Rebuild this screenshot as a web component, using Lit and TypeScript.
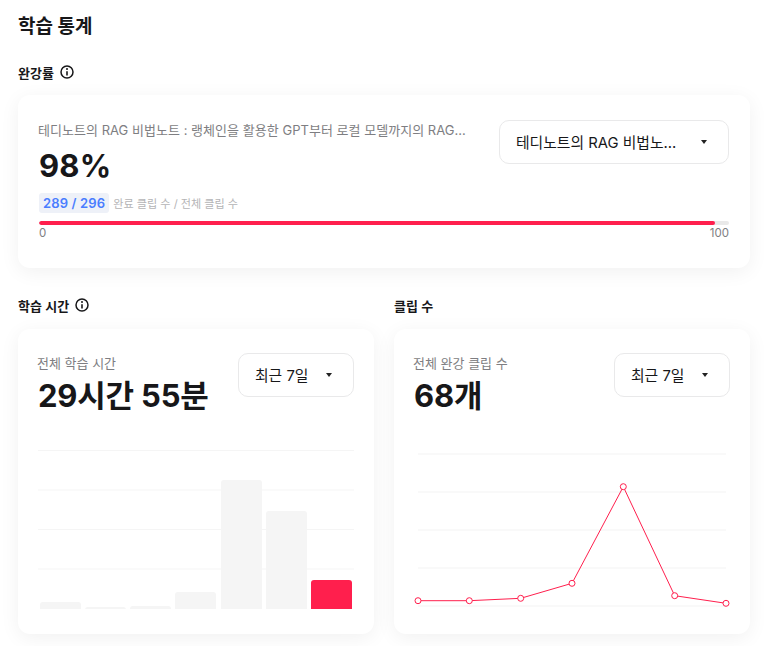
import { css, html, LitElement, svg } from 'lit';
import { customElement } from 'lit/decorators.js';

const bars = [
  { x: 2, top: 152, fill: '#f5f5f5' },
  { x: 47, top: 157, fill: '#f5f5f5' },
  { x: 92, top: 156, fill: '#f5f5f5' },
  { x: 137, top: 142, fill: '#f5f5f5' },
  { x: 183, top: 30, fill: '#f5f5f5' },
  { x: 228, top: 61, fill: '#f5f5f5' },
  { x: 273, top: 130, fill: '#ff1f4d' },
];

const points = [
  [6, 150.7], [57.3, 150.7], [108.7, 148.3], [160, 133.3], [211.3, 36.7], [262.7, 145.7], [314, 153.3],
];

@customElement('app-root')
export class AppRoot extends LitElement {
  static styles = css`
    :host {
      display: block;
      width: 764px;
      height: 646px;
      overflow: hidden;
      background: #fff;
      color: #171719;
      font-family: Inter, "Noto Sans CJK KR", sans-serif;
    }
    .page {
      padding: 15px 14px 0 18px;
    }
    h1 {
      margin: 0;
      font-size: 19px;
      line-height: 24px;
      font-weight: 700;
    }
    .label {
      display: flex;
      align-items: center;
      gap: 6px;
      height: 20px;
      font-size: 13px;
      font-weight: 600;
    }
    .label svg { display: block; }
    .rate-label { margin-top: 23px; }
    .card {
      background: #fff;
      border-radius: 12px;
      box-shadow: 0 4px 20px rgba(0, 0, 0, 0.06);
    }
    .rate-card {
      margin-top: 13px;
      height: 173px;
      box-sizing: border-box;
      padding: 25px 21px 0;
    }
    .rate-top {
      display: flex;
      justify-content: space-between;
      align-items: flex-start;
    }
    .course {
      margin: 0 0 0 -1px;
      padding-top: 1px;
      font-size: 13px;
      letter-spacing: 0.03px;
      line-height: 18px;
      color: #7e7e82;
    }
    .percent {
      margin-top: 7px;
      font-size: 31px;
      line-height: 40px;
      font-weight: 700;
      letter-spacing: 0.2px;
    }
    .select {
      display: flex;
      align-items: center;
      justify-content: space-between;
      box-sizing: border-box;
      height: 44px;
      border: 1px solid #e9e9ea;
      border-radius: 10px;
      background: #fff;
      font-size: 14.8px;
      white-space: nowrap;
    }
    .select > span:first-child { padding-bottom: 2px; }
    .select.wide {
      width: 230px;
      padding: 0 21px 0 16px;
    }
    .select.short {
      width: 116px;
      padding: 0 21px 0 16px;
    }
    .caret {
      width: 0;
      height: 0;
      border-left: 3.5px solid transparent;
      border-right: 3.5px solid transparent;
      border-top: 4px solid #222;
    }
    .counts {
      display: flex;
      align-items: center;
      gap: 4px;
      margin-top: 7px;
      height: 20px;
    }
    .count {
      padding: 0 4px;
      height: 20px;
      line-height: 20px;
      border-radius: 3px;
      background: #eef1f8;
      color: #4a7dff;
      font-size: 13px;
      font-weight: 600;
      letter-spacing: 0.15px;
    }
    .count-note {
      font-size: 11.1px;
      color: #b4b4b6;
    }
    .track {
      margin-top: 8px;
      height: 4px;
      border-radius: 2px;
      background: #e9e9e9;
      overflow: hidden;
    }
    .fill {
      height: 100%;
      border-radius: 2px;
      background: #ff1f4d;
    }
    .scale {
      display: flex;
      justify-content: space-between;
      margin-top: 1px;
      font-size: 11.5px;
      line-height: 14px;
      color: #7e7e82;
    }
    .columns {
      display: grid;
      grid-template-columns: 356px 356px;
      gap: 20px;
      margin-top: 27px;
    }
    .stat-card {
      margin-top: 14px;
      height: 305px;
      box-sizing: border-box;
      padding: 24px 20px 0;
    }
    .stat-top {
      display: flex;
      justify-content: space-between;
      align-items: flex-start;
      height: 88px;
    }
    .stat-name {
      margin-left: -1px;
      font-size: 13px;
      line-height: 20px;
      color: #7e7e82;
    }
    .stat-value {
      margin-top: 3px;
      font-size: 31px;
      line-height: 40px;
      font-weight: 700;
      letter-spacing: -0.2px;
    }
    .chart { display: block; }
    .bars { margin-top: 9px; }
    .line { margin: 9px 0 0 -2px; }
  `;

  private infoIcon() {
    return html`<svg width="14" height="14" viewBox="0 0 14 14" fill="none" stroke="#171719">
      <circle cx="7" cy="7" r="6" stroke-width="1.5"></circle>
      <path d="M7 6.2V10.4" stroke-width="1.6"></path>
      <circle cx="7" cy="4.1" r="1" fill="#171719" stroke="none"></circle>
    </svg>`;
  }

  private barChart() {
    const grid = [0.5, 40, 79.5, 119];
    return html`<svg class="chart bars" width="316" height="160" viewBox="0 0 316 160">
      ${grid.map((y) => svg`<line x1="0" x2="316" y1=${y} y2=${y} stroke="#f5f5f5"></line>`)}
      ${bars.map((b) => svg`<path d="M${b.x} 159V${b.top + 3}a3 3 0 0 1 3-3h35a3 3 0 0 1 3 3V159Z" fill=${b.fill}></path>`)}
    </svg>`;
  }

  private lineChart() {
    const grid = [4, 42, 80, 118, 156];
    const line = points.map((p) => p.join(',')).join(' ');
    return html`<svg class="chart line" width="320" height="160" viewBox="0 0 320 160">
      ${grid.map((y) => svg`<line x1="6" x2="314" y1=${y} y2=${y} stroke="#f7f7f7" stroke-width="1.5"></line>`)}
      <polyline points=${line} fill="none" stroke="#ff1f4d" stroke-width="1"></polyline>
      ${points.map((p) => svg`<circle cx=${p[0]} cy=${p[1]} r="3" fill="#fff" stroke="#ff1f4d" stroke-width="1"></circle>`)}
    </svg>`;
  }

  render() {
    return html`
      <div class="page">
        <h1>학습 통계</h1>
        <div class="label rate-label">완강률 ${this.infoIcon()}</div>
        <div class="card rate-card">
          <div class="rate-top">
            <div>
              <div class="course">테디노트의 RAG 비법노트 : 랭체인을 활용한 GPT부터 로컬 모델까지의 RAG...</div>
              <div class="percent">98%</div>
            </div>
            <div class="select wide"><span>테디노트의 RAG 비법노...</span><span class="caret"></span></div>
          </div>
          <div class="counts">
            <span class="count">289 / 296</span>
            <span class="count-note">완료 클립 수 / 전체 클립 수</span>
          </div>
          <div class="track"><div class="fill" style="width: 98%"></div></div>
          <div class="scale"><span>0</span><span>100</span></div>
        </div>
        <div class="columns">
          <section>
            <div class="label">학습 시간 ${this.infoIcon()}</div>
            <div class="card stat-card">
              <div class="stat-top">
                <div>
                  <div class="stat-name">전체 학습 시간</div>
                  <div class="stat-value">29시간 55분</div>
                </div>
                <div class="select short"><span>최근 7일</span><span class="caret"></span></div>
              </div>
              ${this.barChart()}
            </div>
          </section>
          <section>
            <div class="label">클립 수</div>
            <div class="card stat-card">
              <div class="stat-top">
                <div>
                  <div class="stat-name">전체 완강 클립 수</div>
                  <div class="stat-value">68개</div>
                </div>
                <div class="select short"><span>최근 7일</span><span class="caret"></span></div>
              </div>
              ${this.lineChart()}
            </div>
          </section>
        </div>
      </div>
    `;
  }
}
